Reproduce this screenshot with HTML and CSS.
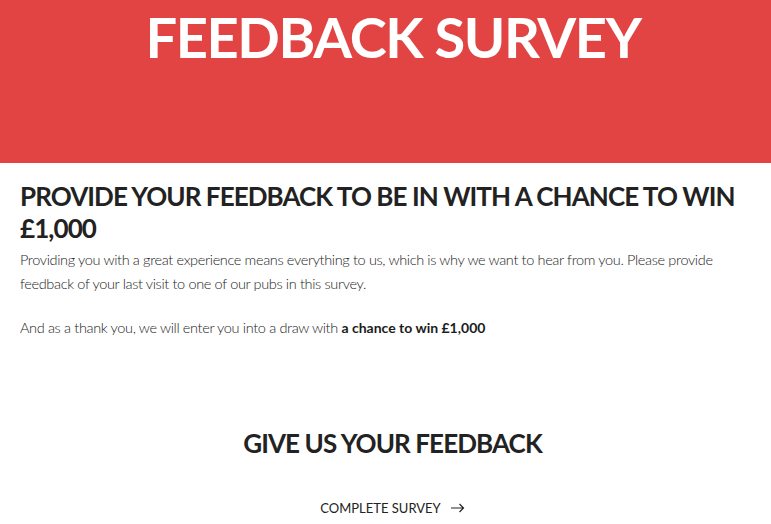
FILE: index.html
```html
<!doctype html>
<html lang="en">

<head>
  <meta charset="utf-8">
  <title>Feedback Survey</title>
  <meta name="viewport" content="width=device-width, initial-scale=1.0">
  <link rel="stylesheet" href="styles.css">
</head>

<body>
  <header class="hero">
    <h1 class="hero_title">FEEDBACK SURVEY</h1>
  </header>

  <section class="intro">
    <h2 class="intro_title">PROVIDE YOUR FEEDBACK TO BE IN WITH A CHANCE TO WIN £1,000</h2>
    <p class="intro_text">Providing you with a great experience means everything to us, which is why we want to hear from you. Please provide feedback of your last visit to one of our pubs in this survey.</p>
    <p class="intro_text">And as a thank you, we will enter you into a draw with <strong>a chance to win £1,000</strong></p>
  </section>

  <section class="cta">
    <h2 class="cta_title">GIVE US YOUR FEEDBACK</h2>
    <a class="cta_link" href="#">COMPLETE SURVEY
      <svg class="cta_arrow" width="14" height="10" viewBox="0 0 14 10"><path d="M0 5H12.5M8.5 1L12.5 5L8.5 9" fill="none" stroke="#222" stroke-width="1.2"/></svg>
    </a>
  </section>
</body>

</html>
```

FILE: styles.css
```css
body {
  margin: 0;
  font-family: Lato, "Open Sans", sans-serif;
  color: #222;
  background: #fff;
}

.hero {
  background-color: #e24444;
  height: 163px;
  padding-left: 15px;
  text-align: center;
}

.hero_title {
  margin: 0;
  padding-top: 5px;
  color: #fff;
  font-size: 56px;
  font-weight: 700;
  line-height: 64px;
  letter-spacing: -1.4px;
}

.intro {
  padding: 17px 20px 0 20px;
}

.intro_title {
  margin: 0 0 4px 0;
  font-size: 26px;
  font-weight: 700;
  line-height: 32px;
  letter-spacing: -0.92px;
  color: #222;
}

.intro_text {
  margin: 0 0 20px 0;
  font-size: 14.5px;
  font-weight: 300;
  line-height: 24px;
  letter-spacing: -0.35px;
  color: #1c1c1c;
}

.intro_text strong {
  font-weight: 700;
  font-size: 14px;
  letter-spacing: 0;
}

.cta {
  padding-top: 67px;
  padding-left: 14px;
  text-align: center;
}

.cta_title {
  margin: 0 0 38px 0;
  font-size: 26px;
  font-weight: 700;
  line-height: 32px;
  letter-spacing: -0.9px;
  color: #222;
}

.cta_link {
  display: inline-flex;
  align-items: center;
  gap: 10px;
  color: #222;
  text-decoration: none;
  font-size: 13px;
  font-weight: 400;
}
```
